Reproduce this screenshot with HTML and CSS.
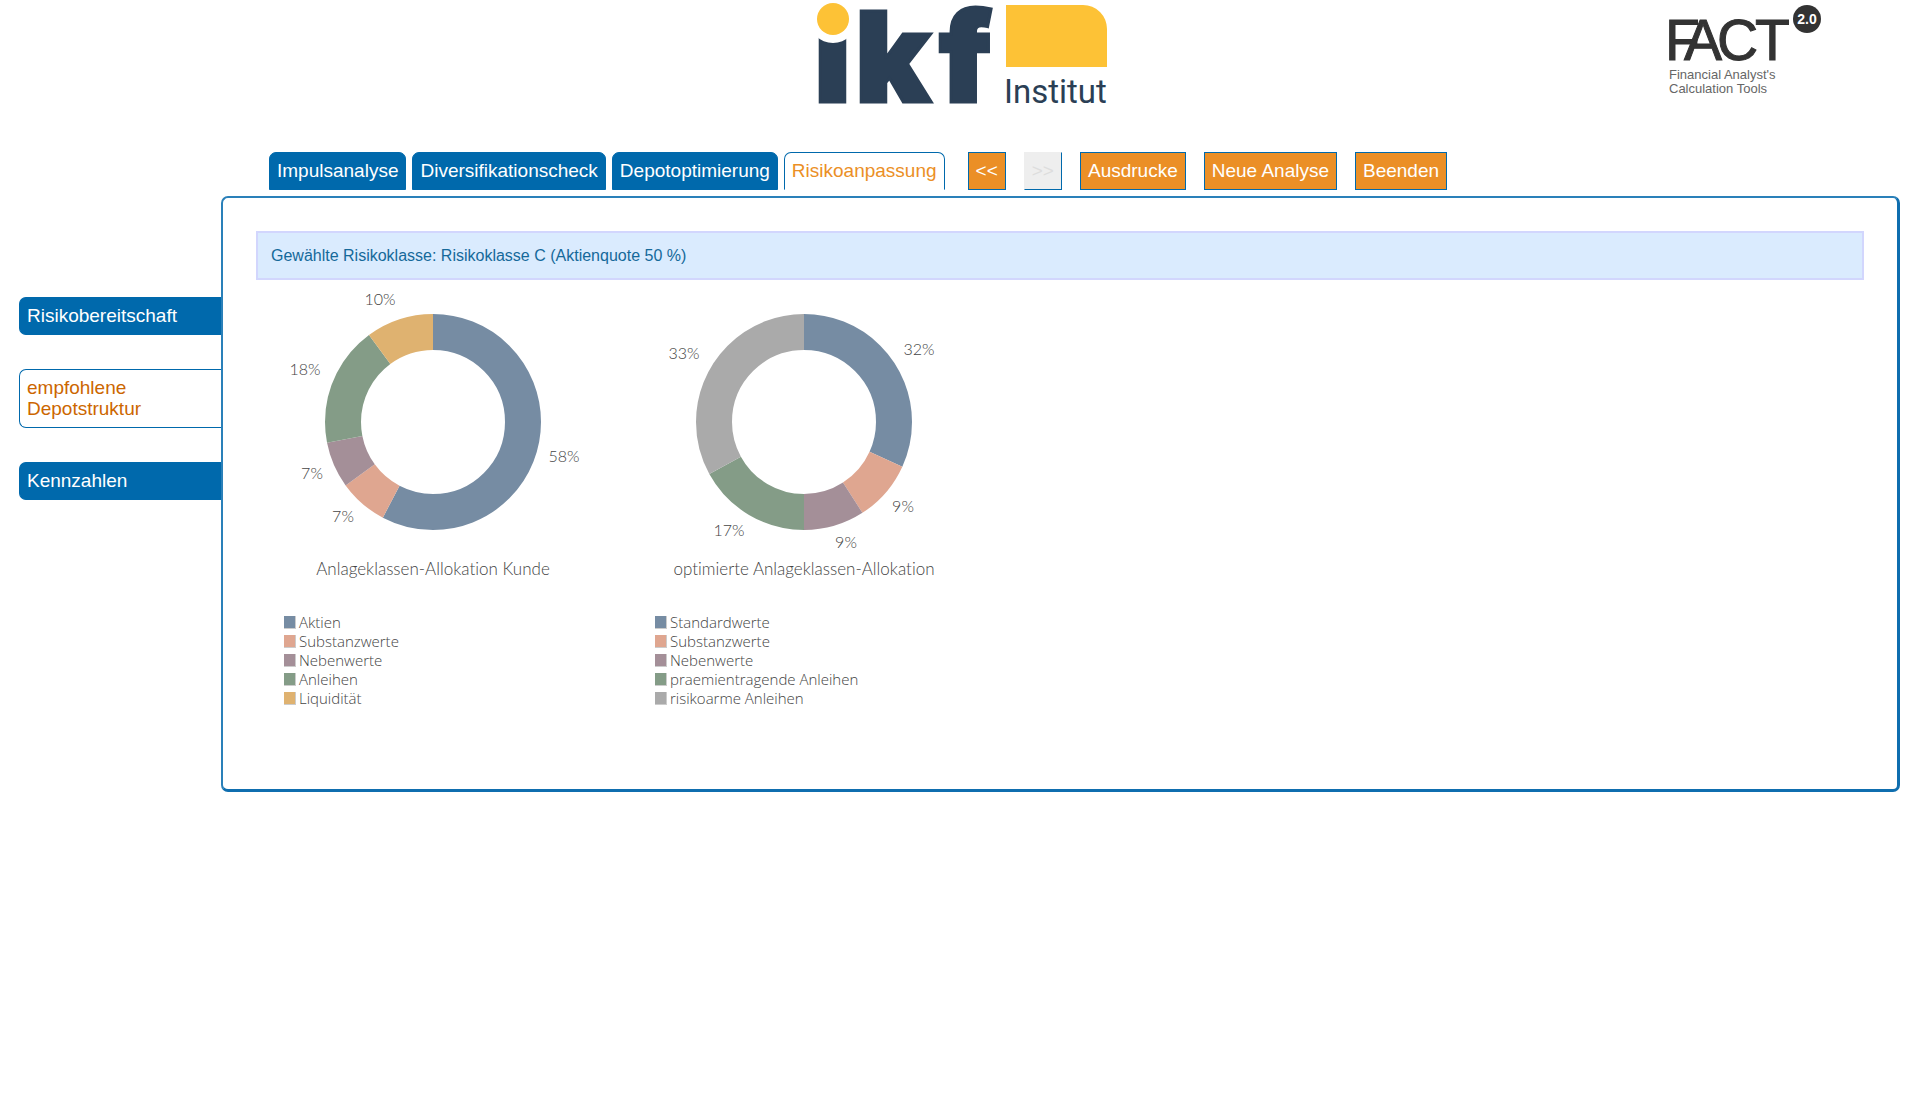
FILE: index.html
```html
<!DOCTYPE html>
<html lang="de">
<head>
<meta charset="utf-8">
<meta name="viewport" content="width=device-width, initial-scale=1">
<title>FACT 2.0 – Risikoanpassung</title>
<link rel="stylesheet" href="styles.css">
</head>
<body>
<header class="header">
  <svg class="logo-ikf" width="292" height="108" viewBox="0 0 292 108" role="img" aria-label="ikf Institut">
    <text class="ikf-letters" y="102" x="-3 38 122">ıkf</text>
    <circle cx="16" cy="19" r="24" fill="#fff"/>
    <circle cx="16" cy="19" r="16" fill="#fdc236"/>
    <path d="M189 5h77a24 24 0 0 1 24 24v38H189z" fill="#fdc236"/>
    <text class="ikf-name" x="187" y="103">Institut</text>
  </svg>
  <svg class="logo-fact" width="154" height="100" viewBox="0 0 154 100" role="img" aria-label="FACT 2.0">
    <text class="fact-letters" y="60" x="-4 15 48 86">FACT</text>
    <circle cx="138" cy="19" r="14" fill="#333"/>
    <text class="fact-version" x="138" y="24">2.0</text>
    <text class="fact-claim" x="0" y="79">Financial Analyst's</text>
    <text class="fact-claim" x="0" y="93">Calculation Tools</text>
  </svg>
</header>

<div class="toolbar">
  <nav class="tabs">
    <a class="tab" href="#impuls">Impulsanalyse</a>
    <a class="tab" href="#diversifikation">Diversifikationscheck</a>
    <a class="tab" href="#depot">Depotoptimierung</a>
    <a class="tab tab-active" href="#risiko">Risikoanpassung</a>
  </nav>
  <div class="actions">
    <button class="action" type="button">&lt;&lt;</button>
    <button class="action" type="button" disabled>&gt;&gt;</button>
    <button class="action" type="button">Ausdrucke</button>
    <button class="action" type="button">Neue Analyse</button>
    <button class="action" type="button">Beenden</button>
  </div>
</div>

<div class="layout">
  <nav class="side">
    <a class="side-item" href="#bereitschaft">Risikobereitschaft</a>
    <a class="side-item side-active" href="#struktur">empfohlene Depotstruktur</a>
    <a class="side-item" href="#kennzahlen">Kennzahlen</a>
  </nav>
  <main class="panel">
    <p class="notice">Gewählte Risikoklasse: Risikoklasse C (Aktienquote 50 %)</p>
    <div class="charts">
      <figure class="chart">
        <svg class="donut" width="302" height="273" viewBox="0 0 302 273">
          <g class="ring" transform="rotate(-90 151 142)">
            <circle class="c-blue" cx="151" cy="142" r="90" pathLength="1000" stroke-dasharray="577 1000"/>
            <circle class="c-salmon" cx="151" cy="142" r="90" pathLength="1000" stroke-dasharray="73 1000" stroke-dashoffset="-577"/>
            <circle class="c-mauve" cx="151" cy="142" r="90" pathLength="1000" stroke-dasharray="69 1000" stroke-dashoffset="-650"/>
            <circle class="c-green" cx="151" cy="142" r="90" pathLength="1000" stroke-dasharray="180 1000" stroke-dashoffset="-719"/>
            <circle class="c-gold" cx="151" cy="142" r="90" pathLength="1000" stroke-dasharray="101 1000" stroke-dashoffset="-899"/>
          </g>
          <g class="value">
            <text x="98" y="25">10%</text>
            <text x="282" y="182">58%</text>
            <text x="23" y="95">18%</text>
            <text x="30" y="199">7%</text>
            <text x="61" y="242">7%</text>
          </g>
        </svg>
        <figcaption class="caption">Anlageklassen-Allokation Kunde</figcaption>
        <ul class="legend">
          <li class="entry"><span class="swatch b-blue"></span>Aktien</li>
          <li class="entry"><span class="swatch b-salmon"></span>Substanzwerte</li>
          <li class="entry"><span class="swatch b-mauve"></span>Nebenwerte</li>
          <li class="entry"><span class="swatch b-green"></span>Anleihen</li>
          <li class="entry"><span class="swatch b-gold"></span>Liquidität</li>
        </ul>
      </figure>
      <figure class="chart">
        <svg class="donut" width="302" height="273" viewBox="0 0 302 273">
          <g class="ring" transform="rotate(-90 151 142)">
            <circle class="c-blue" cx="151" cy="142" r="90" pathLength="1000" stroke-dasharray="318 1000"/>
            <circle class="c-salmon" cx="151" cy="142" r="90" pathLength="1000" stroke-dasharray="91 1000" stroke-dashoffset="-318"/>
            <circle class="c-mauve" cx="151" cy="142" r="90" pathLength="1000" stroke-dasharray="91 1000" stroke-dashoffset="-409"/>
            <circle class="c-green" cx="151" cy="142" r="90" pathLength="1000" stroke-dasharray="170 1000" stroke-dashoffset="-500"/>
            <circle class="c-grey" cx="151" cy="142" r="90" pathLength="1000" stroke-dasharray="330 1000" stroke-dashoffset="-670"/>
          </g>
          <g class="value">
            <text x="31" y="79">33%</text>
            <text x="266" y="75">32%</text>
            <text x="250" y="232">9%</text>
            <text x="193" y="268">9%</text>
            <text x="76" y="256">17%</text>
          </g>
        </svg>
        <figcaption class="caption">optimierte Anlageklassen-Allokation</figcaption>
        <ul class="legend">
          <li class="entry"><span class="swatch b-blue"></span>Standardwerte</li>
          <li class="entry"><span class="swatch b-salmon"></span>Substanzwerte</li>
          <li class="entry"><span class="swatch b-mauve"></span>Nebenwerte</li>
          <li class="entry"><span class="swatch b-green"></span>praemientragende Anleihen</li>
          <li class="entry"><span class="swatch b-grey"></span>risikoarme Anleihen</li>
        </ul>
      </figure>
    </div>
  </main>
</div>
</body>
</html>
```
FILE: styles.css
```css
* { box-sizing: border-box; }

body {
  margin: 0;
  background: #fff;
  font: 19px/21px "Liberation Sans", Arial, sans-serif;
}

.header {
  display: grid;
  grid-template-columns: 1fr auto 1fr;
  height: 152px;
}
.logo-ikf { grid-column: 2; margin-left: 6px; overflow: visible; }
.logo-fact { grid-column: 3; justify-self: end; margin-right: 97px; overflow: visible; }

.ikf-letters {
  font: 900 125px Inter, sans-serif;
  fill: #2b3f55;
  stroke: #2b3f55;
  stroke-width: 3px;
}
.ikf-name { font: 33px Roboto, sans-serif; fill: #2b3f55; }
.fact-letters {
  font: 57px "Liberation Sans", Arial, sans-serif;
  fill: #333;
  stroke: #333;
  stroke-width: 1px;
}
.fact-version { font: bold 14px "Liberation Sans", sans-serif; fill: #fff; text-anchor: middle; }
.fact-claim { font: 13px "Liberation Sans", sans-serif; fill: #666; }

.toolbar {
  display: flex;
  flex-wrap: wrap;
  gap: 23px;
  padding: 0 19px 6px 269px;
}
.tabs { display: flex; gap: 6px; }
.tab {
  padding: 7px 7px 8px;
  border: 1px solid #0069ac;
  border-radius: 7px 7px 0 0;
  background: #0069ac;
  color: #fff;
  text-decoration: none;
}
.tab-active {
  border-bottom-color: transparent;
  background: #fff;
  color: #eb8f26;
}

.actions { display: flex; gap: 18px; }
.action {
  padding: 7px 7px 8px;
  border: 1px solid #0069ac;
  border-radius: 0;
  background: #eb8f26;
  color: #fff;
  font: inherit;
}
.action:disabled {
  border-top-color: #eee;
  border-left-color: #eee;
  background: #eee;
  color: #ddd;
}

.layout {
  display: grid;
  grid-template-columns: 202px 1fr;
  padding: 0 20px 0 19px;
}
.side {
  display: flex;
  flex-direction: column;
  gap: 34px;
  padding-top: 101px;
}
.side-item {
  padding: 7px 7px 8px;
  border: 1px solid #0069ac;
  border-right: 0;
  border-radius: 7px 0 0 7px;
  background: #0069ac;
  color: #fff;
  text-decoration: none;
}
.side-active { background: #fff; color: #cc6600; }

.panel {
  padding: 33px 33px 81px;
  border: 2px solid #2a80b9;
  border-right: 3px solid #0f6eaf;
  border-bottom: 3px solid #0f6eaf;
  border-radius: 7px;
}
.notice {
  margin: 0;
  padding: 13px;
  border: 2px solid #d2d6fd;
  background: #daebfe;
  color: #15699a;
  font-size: 16px;
  line-height: 19px;
}

.charts {
  display: flex;
  flex-wrap: wrap;
  gap: 69px;
  padding-left: 26px;
}
.chart { width: 302px; margin: 0; color: #666; }
.donut { display: block; margin-bottom: 4px; overflow: visible; }
.ring { fill: none; stroke-width: 36px; }
.value { font: 300 16px Lato, sans-serif; fill: #444; text-anchor: middle; }
.caption {
  color: #444;
  font: 300 17px/24px Lato, sans-serif;
  font-variant-ligatures: none;
  text-align: center;
  white-space: nowrap;
}

.legend {
  margin: 32px 0 0;
  padding: 0 0 0 2px;
  list-style: none;
  font: 300 15px/19px "Open Sans", sans-serif;
  color: #444;
}
.entry { display: flex; align-items: center; gap: 3px; white-space: nowrap; }
.swatch { width: 12px; height: 13px; border: solid #ccc; border-width: 0 1px 1px 0; }

.c-blue { stroke: #768ca3; }
.c-salmon { stroke: #dfa690; }
.c-mauve { stroke: #a48f98; }
.c-green { stroke: #849c87; }
.c-gold { stroke: #dfb270; }
.c-grey { stroke: #aaa; }

.b-blue { background: #768ca3; }
.b-salmon { background: #dfa690; }
.b-mauve { background: #a48f98; }
.b-green { background: #849c87; }
.b-gold { background: #dfb270; }
.b-grey { background: #aaa; }
```
